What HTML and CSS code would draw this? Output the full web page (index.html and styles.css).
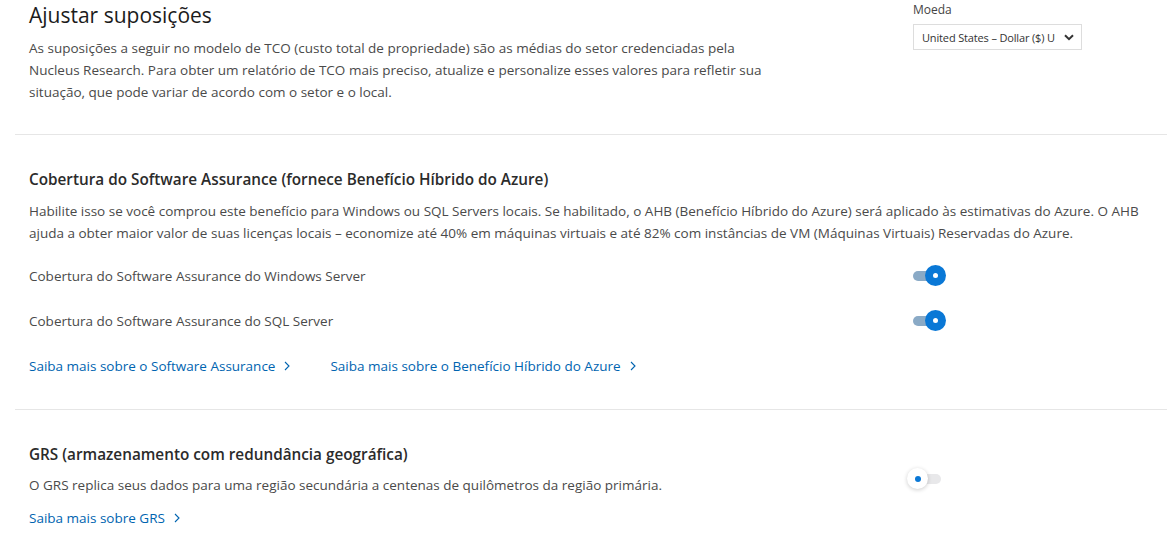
FILE: index.html
```html
<!DOCTYPE html>
<html lang="pt">
<head>
<meta charset="utf-8">
<link rel="stylesheet" href="styles.css">
</head>
<body>
<div class="page">
  <header class="top">
    <div class="intro">
      <h1 class="title">Ajustar suposições</h1>
      <p class="lead">As suposições a seguir no modelo de TCO (custo total de propriedade) são as médias do setor credenciadas pela Nucleus Research. Para obter um relatório de TCO mais preciso, atualize e personalize esses valores para refletir sua situação, que pode variar de acordo com o setor e o local.</p>
    </div>
    <div class="currency">
      <label class="currency-label">Moeda</label>
      <div class="select">
        <span class="select-text">United States – Dollar ($) U</span>
        <svg class="select-chevron" width="10" height="7" viewBox="0 0 10 7"><path d="M1 1.2 L5 5.2 L9 1.2" fill="none" stroke="#333" stroke-width="2"/></svg>
      </div>
    </div>
  </header>

  <section class="section sa">
    <h2 class="section-title">Cobertura do Software Assurance (fornece Benefício Híbrido do Azure)</h2>
    <p class="section-desc">Habilite isso se você comprou este benefício para Windows ou SQL Servers locais. Se habilitado, o AHB (Benefício Híbrido do Azure) será aplicado às estimativas do Azure. O AHB ajuda a obter maior valor de suas licenças locais – economize até 40% em máquinas virtuais e até 82% com instâncias de VM (Máquinas Virtuais) Reservadas do Azure.</p>
    <div class="row">
      <span class="row-label">Cobertura do Software Assurance do Windows Server</span>
      <span class="toggle on"><span class="knob"></span></span>
    </div>
    <div class="row">
      <span class="row-label">Cobertura do Software Assurance do SQL Server</span>
      <span class="toggle on"><span class="knob"></span></span>
    </div>
    <div class="links">
      <a class="link">Saiba mais sobre o Software Assurance <svg class="chev" width="6" height="10" viewBox="0 0 6 10"><path d="M1 1 L5 5 L1 9" fill="none" stroke="currentColor" stroke-width="1.1"/></svg></a>
      <a class="link">Saiba mais sobre o Benefício Híbrido do Azure <svg class="chev" width="6" height="10" viewBox="0 0 6 10"><path d="M1 1 L5 5 L1 9" fill="none" stroke="currentColor" stroke-width="1.1"/></svg></a>
    </div>
  </section>

  <section class="section grs">
    <h2 class="section-title">GRS (armazenamento com redundância geográfica)</h2>
    <div class="row grs-row">
      <span class="section-desc">O GRS replica seus dados para uma região secundária a centenas de quilômetros da região primária.</span>
      <span class="toggle off"><span class="knob"></span></span>
    </div>
    <div class="links">
      <a class="link">Saiba mais sobre GRS <svg class="chev" width="6" height="10" viewBox="0 0 6 10"><path d="M1 1 L5 5 L1 9" fill="none" stroke="currentColor" stroke-width="1.1"/></svg></a>
    </div>
  </section>
</div>
</body>
</html>
```
FILE: styles.css
```css
* { box-sizing: border-box; }
html, body { margin: 0; padding: 0; background: #fff; }
body {
  font-family: "Open Sans", "Noto Sans", "Liberation Sans", sans-serif;
  color: #4a4a4a;
  font-size: 13.5px;
  overflow: hidden;
}
.page { margin-left: 15px; }

.top {
  display: flex;
  justify-content: space-between;
  padding: 0 0 31px 14px;
  border-bottom: 1px solid #e6e6e6;
}
.intro { width: 752px; }
.title {
  margin: 0;
  font-size: 21px;
  font-weight: 400;
  color: #1b1b1b;
  line-height: 30px;
}
.lead {
  margin: 7px 0 0;
  line-height: 22px;
}
.currency { width: 254px; padding-top: 2px; }
.currency-label {
  display: block;
  font-size: 12px;
  color: #444;
  line-height: 16px;
}
.select {
  margin-top: 6px;
  width: 169px;
  height: 26px;
  border: 1px solid #ddd;
  display: flex;
  align-items: center;
  padding: 0 7px 0 8px;
  gap: 3px;
}
.select-text {
  font-size: 11px;
  letter-spacing: -0.15px;
  color: #333;
  white-space: nowrap;
  flex: 1;
}
.select-chevron { flex: none; }

.section {
  padding: 33px 0 0 14px;
}
.sa { padding-bottom: 32px; border-bottom: 1px solid #e6e6e6; }
.section-title {
  margin: 0;
  font-size: 15.3px;
  font-weight: 600;
  color: #2b2b2b;
  line-height: 22px;
}
.section-desc {
  margin: 10px 0 0;
  line-height: 22px;
}
.row {
  display: flex;
  align-items: center;
  margin-top: 16px;
  height: 32px;
}
.row + .row { margin-top: 13px; }
.row-label { width: 884px; line-height: 22px; }
.grs-row { margin-top: 5px; height: 30px; }
.grs-row .section-desc { margin: 0; width: 878px; }
.grs-row .toggle { margin-top: -12px; }

.toggle {
  position: relative;
  width: 34px;
  height: 22px;
  display: inline-block;
}
.toggle::before {
  content: "";
  position: absolute;
  left: 0;
  top: 6px;
  width: 28px;
  height: 10px;
  border-radius: 5px;
  background: #8aaac6;
}
.toggle .knob {
  position: absolute;
  top: 0;
  width: 21px;
  height: 21px;
  border-radius: 50%;
}
.toggle.on .knob {
  left: 12px;
  background: #0a78d6;
}
.toggle.on .knob::after {
  content: "";
  position: absolute;
  left: 8px;
  top: 8px;
  width: 5px;
  height: 5px;
  border-radius: 50%;
  background: #fff;
}
.toggle.off::before {
  left: 10px;
  width: 24px;
  background: #e8e8ea;
}
.toggle.off .knob {
  left: 0;
  background: #fff;
  box-shadow: 0 1px 4px rgba(0,0,0,0.2);
}
.toggle.off .knob::after {
  content: "";
  position: absolute;
  left: 8px;
  top: 8px;
  width: 6px;
  height: 6px;
  border-radius: 50%;
  background: #0a78d6;
}

.links {
  display: flex;
  gap: 40px;
  margin-top: 18px;
}
.link {
  color: #0064b0;
  line-height: 22px;
  display: inline-flex;
  align-items: center;
  gap: 9px;
  cursor: pointer;
}
.chev { flex: none; }
.grs .links { margin-top: 7px; }
```
